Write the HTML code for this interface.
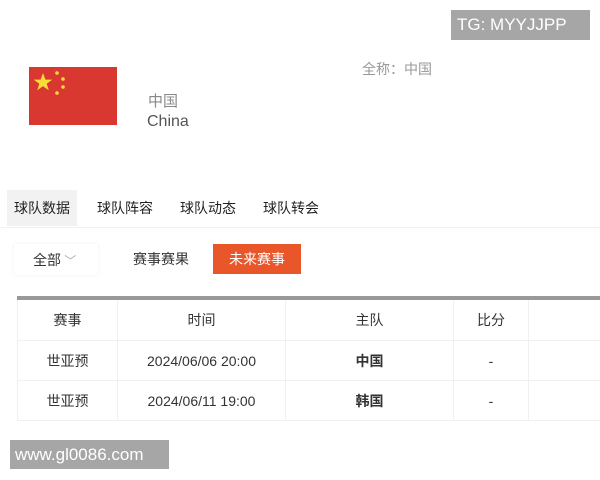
<!DOCTYPE html>
<html><head><meta charset="utf-8"><style>
body{margin:0;width:600px;height:480px;background:#fff;position:relative;overflow:hidden;font-family:"Liberation Sans","Noto Sans CJK SC",sans-serif;}
.a{position:absolute;white-space:nowrap}
table{position:absolute;left:17px;top:296px;border-collapse:collapse;font-size:14px;color:#333;table-layout:fixed}
td{border:1px solid #f0f0f0;text-align:center;height:39px;padding:0}
tr.h td{border-top:4px solid #999;height:40px}
</style></head><body>
<div class="a" style="left:451px;top:10px;width:139px;height:30px;background:#a6a6a6;color:#fff;font-size:17px;line-height:30px;text-indent:6px">TG: MYYJJPP</div>
<svg class="a" style="left:29px;top:67px" width="88" height="58" viewBox="0 0 88 58">
<rect width="88" height="58" fill="#d8382f"/>
<polygon fill="#fadb3a" points="14,6 16.4,12.6 23.3,12.6 17.7,16.7 19.8,23.3 14,19.2 8.2,23.3 10.3,16.7 4.7,12.6 11.6,12.6"/>
<circle cx="28" cy="6" r="1.8" fill="#fadb3a"/><circle cx="34" cy="12" r="1.8" fill="#fadb3a"/><circle cx="34" cy="20" r="1.8" fill="#fadb3a"/><circle cx="28" cy="26" r="1.8" fill="#fadb3a"/>
</svg>
<div class="a" style="left:362px;top:59px;font-size:14px;color:#999">全称：中国</div>
<div class="a" style="left:148px;top:90px;font-size:15px;color:#888">中国</div>
<div class="a" style="left:147px;top:113px;font-size:16px;color:#555">China</div>
<div class="a" style="left:7px;top:190px;width:70px;height:36px;background:#f2f2f2"></div>
<div class="a" style="left:0;top:227px;width:600px;height:1px;background:#f2f2f2"></div>
<div class="a" style="left:14px;top:198px;font-size:14px;color:#222">球队数据</div>
<div class="a" style="left:97px;top:198px;font-size:14px;color:#222">球队阵容</div>
<div class="a" style="left:180px;top:198px;font-size:14px;color:#222">球队动态</div>
<div class="a" style="left:263px;top:198px;font-size:14px;color:#222">球队转会</div>
<div class="a" style="left:14px;top:244px;width:84px;height:31px;box-shadow:0 0 3px #eee"></div>
<div class="a" style="left:33px;top:250px;font-size:14px;color:#333">全部<span style="color:#aaa;font-size:12px"> ﹀</span></div>
<div class="a" style="left:133px;top:249px;font-size:14px;color:#333">赛事赛果</div>
<div class="a" style="left:213px;top:244px;width:88px;height:30px;background:#e8562a;color:#fff;font-size:14px;line-height:30px;text-align:center">未来赛事</div>
<table style="width:600px">
<colgroup><col style="width:100px"><col style="width:168px"><col style="width:168px"><col style="width:75px"><col style="width:89px"></colgroup>
<tr class="h"><td>赛事</td><td>时间</td><td>主队</td><td>比分</td><td></td></tr>
<tr><td>世亚预</td><td>2024/06/06 20:00</td><td><b>中国</b></td><td>-</td><td></td></tr>
<tr><td>世亚预</td><td>2024/06/11 19:00</td><td><b>韩国</b></td><td>-</td><td></td></tr>
</table>
<div class="a" style="left:10px;top:440px;width:159px;height:29px;background:#a6a6a6;color:#fff;font-size:17px;line-height:29px;text-indent:5px">www.gl0086.com</div>
</body></html>
